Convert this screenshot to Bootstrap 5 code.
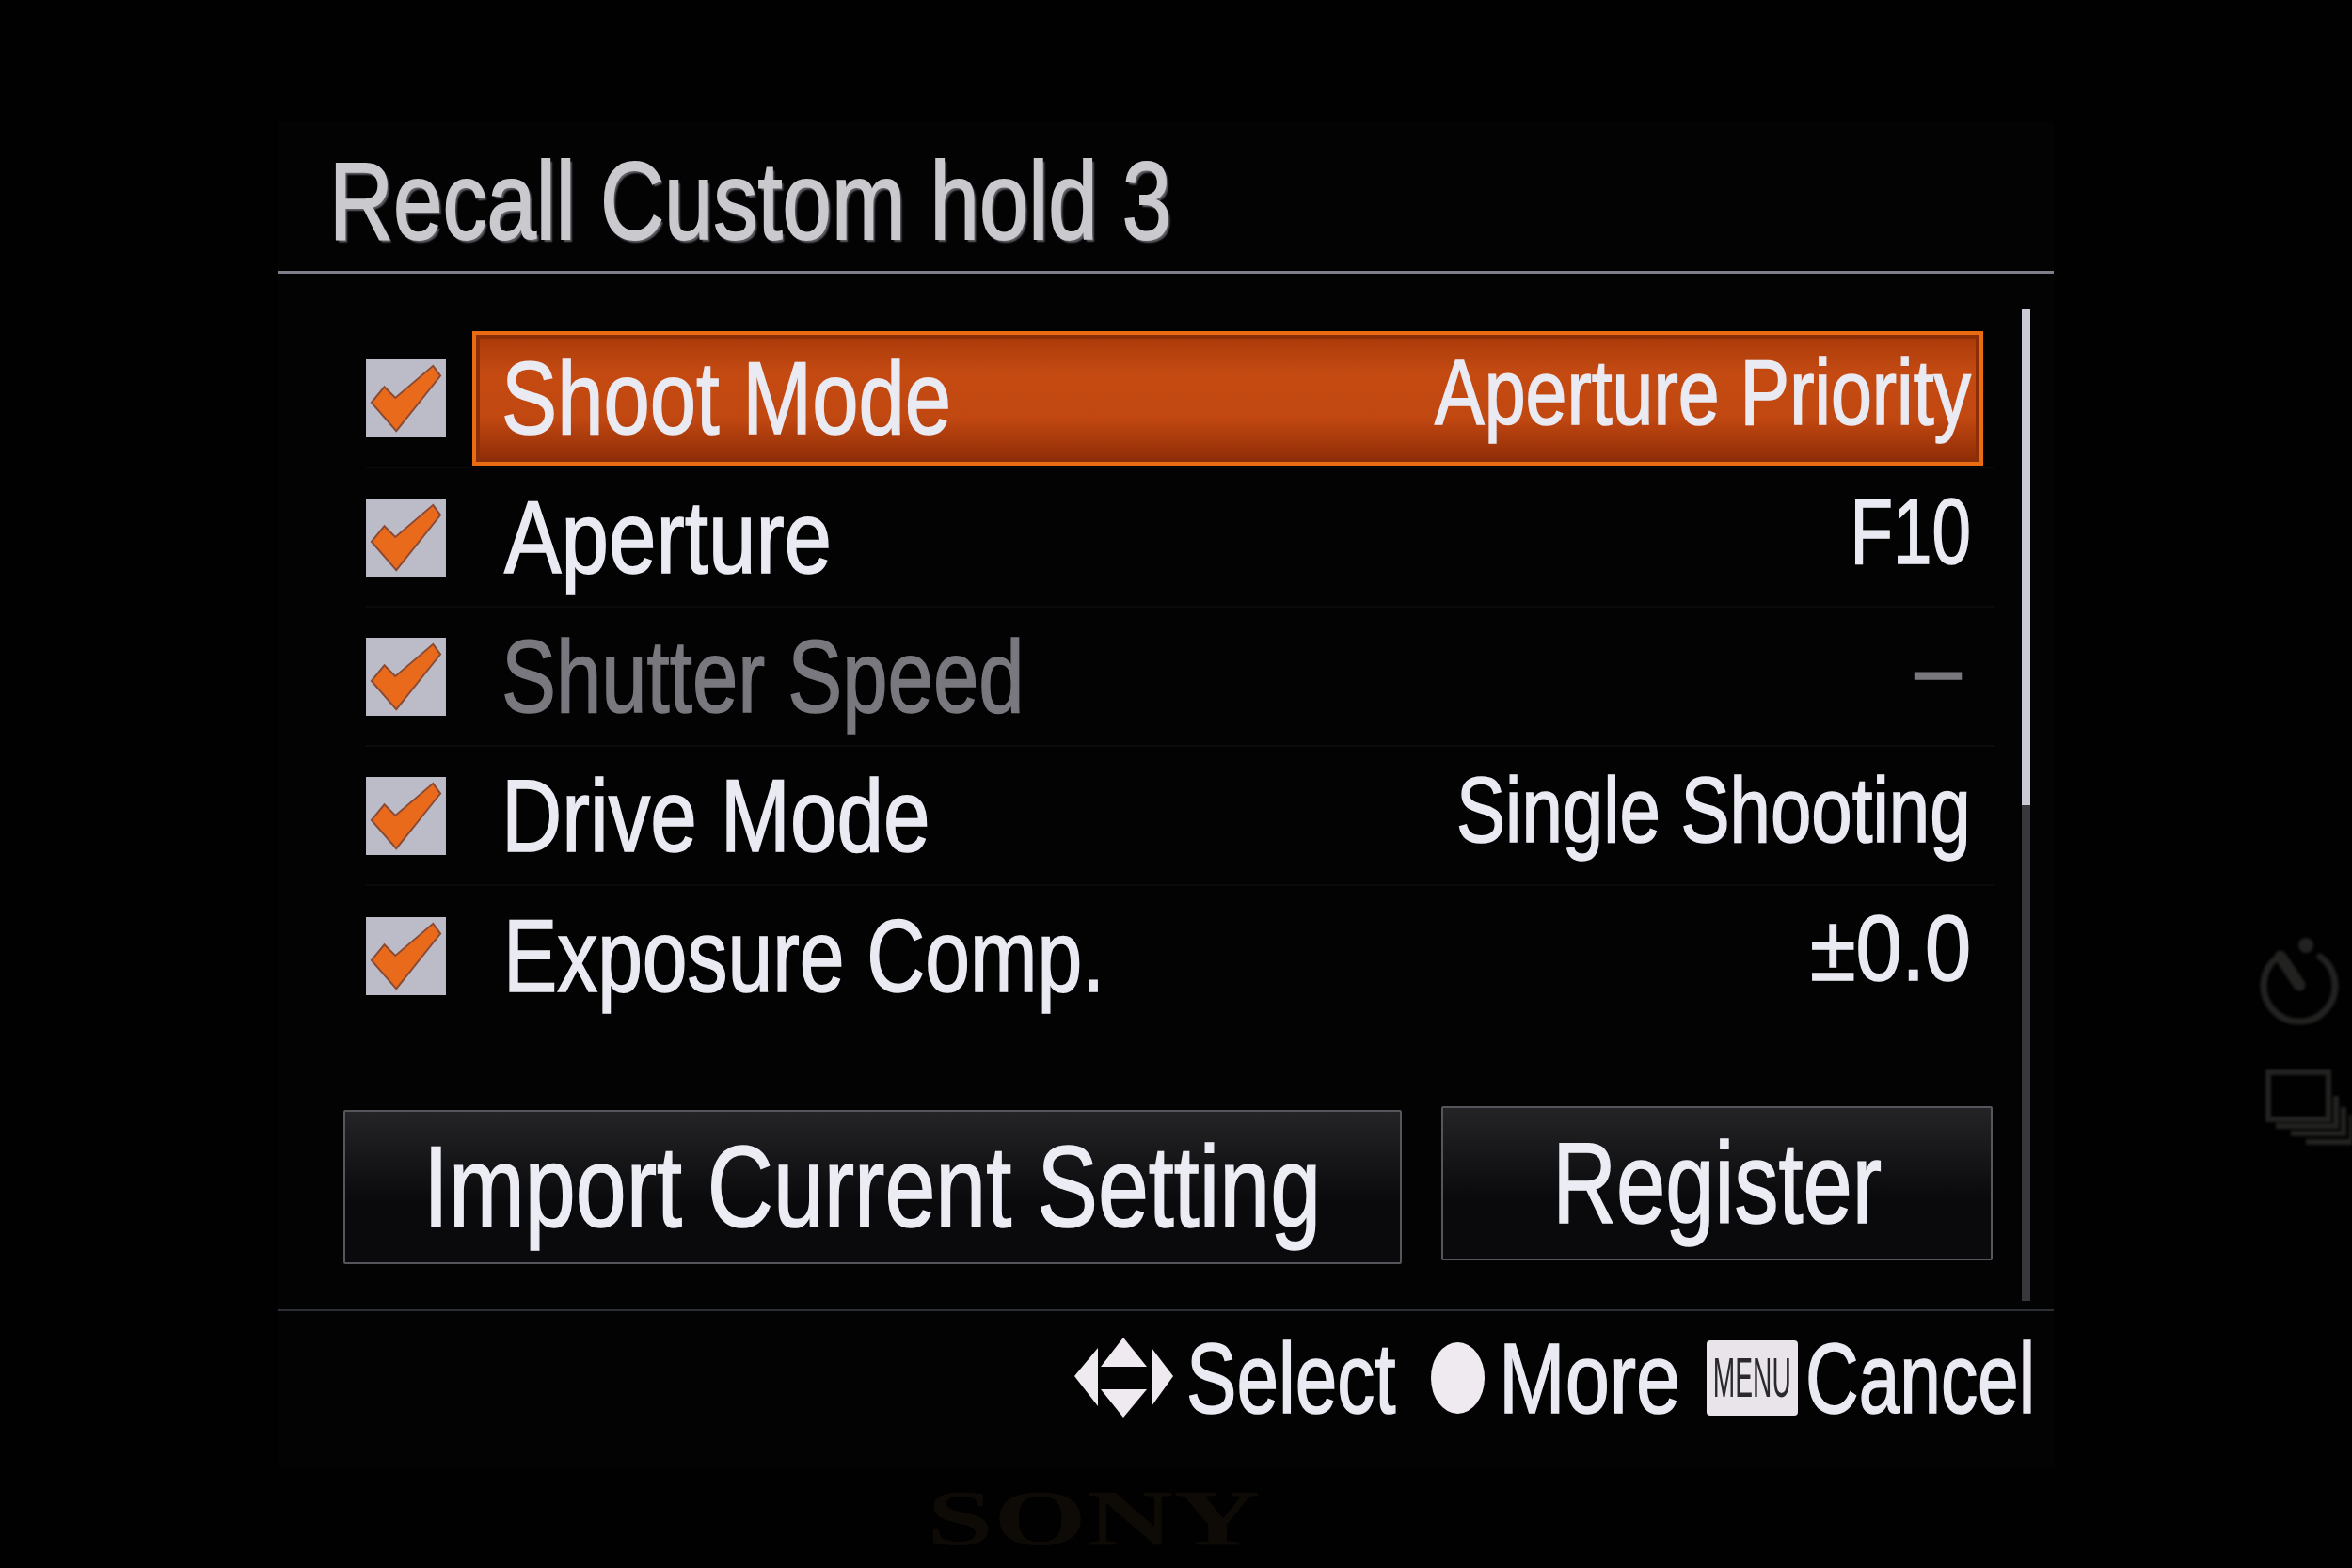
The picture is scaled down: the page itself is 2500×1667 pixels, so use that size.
<!doctype html>
<html lang="en"><head><meta charset="utf-8"><title>Recall Custom hold 3</title>
<link href="https://cdn.jsdelivr.net/npm/bootstrap@5.3.0/dist/css/bootstrap.min.css" rel="stylesheet">
<style>
html,body{height:100%}
body{background:#010102;width:2500px;height:1667px;overflow:hidden;position:relative;font-family:"Liberation Sans",Arial,sans-serif;color:#eaeaf3}
.cam-screen{width:1888px;height:1430px;margin-left:295px;margin-top:130px;background:#030304;position:absolute;top:0;left:0}
.cam-head{height:161px;border-bottom:3px solid #7f7f8a;padding-left:55px}
.squeeze{display:inline-block;white-space:nowrap;transform:scaleX(.8);transform-origin:left center;line-height:1;-webkit-text-stroke:1.6px currentColor}
.squeeze-end{transform-origin:right center}
.squeeze-mid{transform-origin:center center}
.cam-title{font-size:117px;color:#c9c9ce;transform:scaleX(.805);text-shadow:3px 3px 2px #5c5c62;-webkit-text-stroke:2px currentColor}
.cam-main{height:1101px}
.cam-col{width:1825px;padding:59px 0 0 94px}
.opt-row{height:148px;border-bottom:2px solid #0b0b0e}
.opt-row.is-last{border-bottom:0}
.opt-check{width:85px;height:83px;flex:none;margin-right:28px;display:block}
.opt-body{width:1606px;height:143px;padding:0 9px 0 27px;border:4px solid transparent}
.opt-on{border-color:#ea6c12;background:linear-gradient(#a93a0a,#c44a12 30%,#c24811 65%,#8e2c06);box-shadow:inset 0 0 0 4px #8c2f08}
.opt-name{font-size:110px}
.opt-val{font-size:98px;margin-bottom:12px}
.fit-shoot{transform:scaleX(.806)}
.fit-aperture{transform:scaleX(.825);margin-left:3px}
.fit-shutter{transform:scaleX(.79)}
.fit-drive{transform:scaleX(.81)}
.fit-exposure{transform:scaleX(.78);margin-left:2px}
.fit-priority{transform:scaleX(.805)}
.fit-f{transform:scaleX(.76)}
.fit-dash{transform:scaleX(.9);margin-right:10px;margin-bottom:18px}
.fit-single{transform:scaleX(.796)}
.fit-ev{transform:scaleX(.9);margin-bottom:16px}
.opt-off{color:#78787e}
.cam-actions{margin-top:86px;margin-left:-24px;gap:42px}
.cam-btn{height:164px;border:2px solid #55555c;border-radius:2px;background:linear-gradient(#242427,#0a0a0c 60%);color:#ecedf4;padding:0;font-size:122px;display:flex;align-items:center;justify-content:center}
.cam-btn:hover{background:linear-gradient(#242427,#0a0a0c 60%);color:#ecedf4;border-color:#55555c}
.cam-btn-import{width:1125px;margin-top:4px}
.cam-btn-register{width:586px}
.cam-btn-import .squeeze{transform:scaleX(.795)}
.cam-btn-register .squeeze{transform:scaleX(.77)}
.cam-track{width:9px;height:1054px;margin:38px 0 0 29px;background:linear-gradient(#c9c9d6 0,#c9c9d6 50%,#38383c 50%,#38383c 100%)}
.cam-foot{border-top:2px solid #2c3036;padding-top:18px;padding-left:847px}
.hint{font-size:106px}
.hint-select{width:224px;margin-left:14px;transform:scaleX(.755)}
.hint-more{width:190px;margin-left:15px;transform:scaleX(.80)}
.hint-cancel{width:241px;margin-left:8px;transform:scaleX(.74)}
.hint-dot{width:57px;height:76px;border-radius:50%;background:#efe9f0;margin-left:36px;flex:none}
.hint-menu{width:97px;height:80px;background:#e9e4ea;border-radius:4px;margin-left:31px;flex:none;color:#2a2a2e;overflow:hidden}
.hint-menu span{font-size:60px;transform:scaleX(.47);-webkit-text-stroke:0}
.ghost{position:absolute;display:block;filter:blur(1.5px)}
.ghost-timer{left:2400px;top:995px;width:90px;height:95px}
.ghost-stack{left:2405px;top:1135px;width:95px;height:82px}
.ghost-brand{position:absolute;left:985px;top:1568px;font-family:"Liberation Serif",serif;font-weight:700;font-size:85px;line-height:1.1;color:#0e0a05;transform:scaleX(1.5);transform-origin:left center}
</style></head>
<body>
<div class="cam-screen d-flex flex-column">
  <div class="cam-head d-flex align-items-end pb-3">
    <span class="squeeze cam-title">Recall Custom hold 3</span>
  </div>
  <div class="cam-main d-flex">
    <div class="cam-col">
      <div class="opt-row d-flex align-items-center">
        <svg class="opt-check" viewBox="0 0 87 85"><rect width="87" height="85" fill="#bcbcc8"/><polygon points="6,47 20,30 32,42 73,7 81,18 33,78" fill="#ea6a1c" stroke="#8a4a34" stroke-width="2"/></svg>
        <div class="opt-body opt-on d-flex align-items-center justify-content-between"><span class="squeeze opt-name fit-shoot">Shoot Mode</span><span class="squeeze squeeze-end opt-val fit-priority">Aperture Priority</span></div>
      </div>
      <div class="opt-row d-flex align-items-center">
        <svg class="opt-check" viewBox="0 0 87 85"><rect width="87" height="85" fill="#bcbcc8"/><polygon points="6,47 20,30 32,42 73,7 81,18 33,78" fill="#ea6a1c" stroke="#8a4a34" stroke-width="2"/></svg>
        <div class="opt-body d-flex align-items-center justify-content-between"><span class="squeeze opt-name fit-aperture">Aperture</span><span class="squeeze squeeze-end opt-val fit-f">F10</span></div>
      </div>
      <div class="opt-row d-flex align-items-center">
        <svg class="opt-check" viewBox="0 0 87 85"><rect width="87" height="85" fill="#bcbcc8"/><polygon points="6,47 20,30 32,42 73,7 81,18 33,78" fill="#ea6a1c" stroke="#8a4a34" stroke-width="2"/></svg>
        <div class="opt-body opt-off d-flex align-items-center justify-content-between"><span class="squeeze opt-name fit-shutter">Shutter Speed</span><span class="squeeze squeeze-end opt-val fit-dash">–</span></div>
      </div>
      <div class="opt-row d-flex align-items-center">
        <svg class="opt-check" viewBox="0 0 87 85"><rect width="87" height="85" fill="#bcbcc8"/><polygon points="6,47 20,30 32,42 73,7 81,18 33,78" fill="#ea6a1c" stroke="#8a4a34" stroke-width="2"/></svg>
        <div class="opt-body d-flex align-items-center justify-content-between"><span class="squeeze opt-name fit-drive">Drive Mode</span><span class="squeeze squeeze-end opt-val fit-single">Single Shooting</span></div>
      </div>
      <div class="opt-row is-last d-flex align-items-center">
        <svg class="opt-check" viewBox="0 0 87 85"><rect width="87" height="85" fill="#bcbcc8"/><polygon points="6,47 20,30 32,42 73,7 81,18 33,78" fill="#ea6a1c" stroke="#8a4a34" stroke-width="2"/></svg>
        <div class="opt-body d-flex align-items-center justify-content-between"><span class="squeeze opt-name fit-exposure">Exposure Comp.</span><span class="squeeze squeeze-end opt-val fit-ev">±0.0</span></div>
      </div>
      <div class="cam-actions d-flex">
        <button type="button" class="btn cam-btn cam-btn-import"><span class="squeeze squeeze-mid">Import Current Setting</span></button>
        <button type="button" class="btn cam-btn cam-btn-register"><span class="squeeze squeeze-mid">Register</span></button>
      </div>
    </div>
    <div class="cam-track"></div>
  </div>
  <div class="cam-foot d-flex align-items-center">
    <svg width="105" height="86" viewBox="0 0 105 86" class="flex-none d-block"><g fill="#efe9f0"><polygon points="52,0 77,31 28,31"/><polygon points="52,85 77,55 28,55"/><polygon points="0,41 25,11 25,73"/><polygon points="105,41 82,11 82,73"/></g></svg>
    <span class="squeeze hint hint-select">Select</span>
    <span class="hint-dot"></span>
    <span class="squeeze hint hint-more">More</span>
    <span class="hint-menu d-flex align-items-center justify-content-center"><span class="squeeze squeeze-mid">MENU</span></span>
    <span class="squeeze hint hint-cancel">Cancel</span>
  </div>
</div>
<svg class="ghost ghost-timer" viewBox="0 0 90 95" fill="none" stroke="#222221" stroke-width="7"><path d="M22 22A38 38 0 1 0 66 22" stroke-linecap="round"/><path d="M24 22L44 52" stroke-width="13" stroke-linecap="round"/><circle cx="51" cy="10" r="8" fill="#222221" stroke="none"/></svg>
<svg class="ghost ghost-stack" viewBox="0 0 95 82" fill="none" stroke="#222220" stroke-width="6"><rect x="6" y="5" width="64" height="50"/><path d="M14 62H78V30M30 70H86V42M46 79H95V50"/></svg>
<div class="ghost-brand">SONY</div>
<script src="https://cdn.jsdelivr.net/npm/bootstrap@5.3.0/dist/js/bootstrap.bundle.min.js"></script>
</body></html>
